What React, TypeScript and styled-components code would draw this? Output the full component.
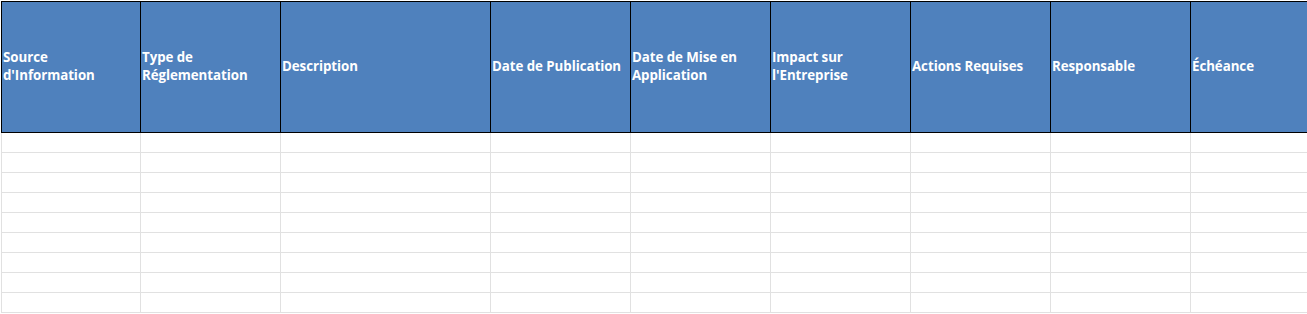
import React from "react";
import styled, { createGlobalStyle } from "styled-components";

const GlobalStyle = createGlobalStyle`
  html, body {
    margin: 0;
    padding: 0;
    background: #ffffff;
  }
  body {
    font-family: "Open Sans", "Liberation Sans", sans-serif;
    overflow: hidden;
  }
`;

// colonnes : largeur de chaque cellule, bordure droite comprise
const columns: { lines: string[]; width: number }[] = [
  { lines: ["Source", "d'Information"], width: 140 },
  { lines: ["Type de", "Réglementation"], width: 140 },
  { lines: ["Description"], width: 210 },
  { lines: ["Date de Publication"], width: 140 },
  { lines: ["Date de Mise en", "Application"], width: 140 },
  { lines: ["Impact sur", "l'Entreprise"], width: 140 },
  { lines: ["Actions Requises"], width: 140 },
  { lines: ["Responsable"], width: 140 },
  { lines: ["Échéance"], width: 140 },
];

const BODY_ROWS = 9;

const Sheet = styled.div<{ $template: string }>`
  display: grid;
  grid-template-columns: ${(p) => p.$template};
  grid-template-rows: 132px;
  grid-auto-rows: 20px;
  margin: 1px 0 0 1px;
  width: max-content;
`;

const HeaderCell = styled.div<{ $first: boolean }>`
  box-sizing: border-box;
  background: #4f81bd;
  color: #ffffff;
  font-weight: 700;
  font-size: 13.3px;
  line-height: 18px;
  letter-spacing: -0.05px;
  border-top: 1px solid #000000;
  border-bottom: 1px solid #000000;
  border-right: 1px solid #000000;
  border-left: ${(p) => (p.$first ? "1px solid #000000" : "none")};
  display: flex;
  flex-direction: column;
  justify-content: center;
  padding: 0 1px 2px 1px;
  white-space: nowrap;
  overflow: hidden;
`;

const Cell = styled.div<{ $first: boolean }>`
  box-sizing: border-box;
  background: #ffffff;
  border-bottom: 1px solid #e1e1e1;
  border-right: 1px solid #e1e1e1;
  border-left: ${(p) => (p.$first ? "1px solid #e1e1e1" : "none")};
`;

export default function App() {
  const template = columns.map((c) => `${c.width}px`).join(" ");
  return (
    <>
      <GlobalStyle />
      <Sheet $template={template}>
        {columns.map((c, i) => (
          <HeaderCell key={c.lines.join(" ")} $first={i === 0}>
            {c.lines.map((l) => (
              <span key={l}>{l}</span>
            ))}
          </HeaderCell>
        ))}
        {Array.from({ length: BODY_ROWS }).map((_, r) =>
          columns.map((c, i) => (
            <Cell key={`${r}-${i}`} $first={i === 0} />
          ))
        )}
      </Sheet>
    </>
  );
}
